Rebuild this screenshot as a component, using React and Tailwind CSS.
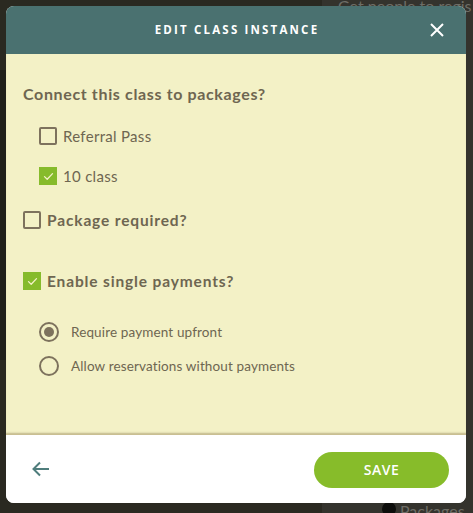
import React from "react";

function Checkbox({ checked }) {
  return checked ? (
    <span className="flex h-[18px] w-[18px] shrink-0 items-center justify-center bg-[#86bb2b]">
      <svg width="11" height="9" viewBox="0 0 11 9" fill="none">
        <path d="M1.5 4.6 L4.2 7.2 L9.5 1.6" stroke="#f4f1c6" strokeWidth="1.3" strokeLinecap="round" strokeLinejoin="round" />
      </svg>
    </span>
  ) : (
    <span className="block h-[18px] w-[18px] shrink-0 rounded-[2px] border-2 border-[#7d725d]" />
  );
}

function Radio({ checked }) {
  return (
    <span className="flex h-[20px] w-[20px] shrink-0 items-center justify-center rounded-full border-2 border-[#7d725d]">
      {checked && <span className="block h-[10px] w-[10px] rounded-full bg-[#7d725d]" />}
    </span>
  );
}

export default function App() {
  return (
    <div className="relative h-[513px] w-[473px] overflow-hidden bg-[#2a2921]" style={{ fontFamily: "Lato, 'Noto Sans', sans-serif" }}>
      {/* dimmed page underneath */}
      <div className="absolute left-[322px] top-0 h-[513px] w-[151px] bg-[#34332d]" />
      <div className="absolute left-[0px] top-[70px] h-[290px] w-[6px] bg-[#1f201a]" />
      <div className="absolute left-[338px] top-[-6px] text-[16px] text-[#6e6d66]">Get people to regis</div>
      <div className="absolute left-[382px] top-[502px] h-[14px] w-[14px] rounded-full bg-[#0d0d0b]" />
      <div className="absolute left-[400px] top-[499px] text-[16px] text-[#6e6d66]">Packages $</div>

      {/* modal */}
      <div className="relative ml-[6px] mt-[6px] flex h-[497px] w-[460px] flex-col overflow-hidden rounded-[8px] bg-white">
        <div className="relative flex h-[48px] shrink-0 items-center justify-center bg-[#4a7170]">
          <span className="pl-[2px] text-[11.5px] font-bold tracking-[0.19em] text-white" style={{ fontFamily: "'Open Sans', sans-serif" }}>
            EDIT CLASS INSTANCE
          </span>
          <svg className="absolute right-[22px] top-[17px]" width="14" height="14" viewBox="0 0 14 14">
            <path d="M1 1 L13 13 M13 1 L1 13" stroke="white" strokeWidth="2" />
          </svg>
        </div>

        <div className="flex flex-1 flex-col bg-[#f3f1c6] pl-[17px] pt-[30px] text-[#6e6651] shadow-[inset_0_-2px_2px_-1px_#bfb58a]">
          <div className="text-[16px] font-bold leading-[20px] tracking-[0.04em]">Connect this class to packages?</div>

          <div className="mt-[23px] flex items-center gap-[6px] pl-[16px]">
            <Checkbox />
            <span className="text-[15px] leading-[18px] tracking-[0.02em]">Referral Pass</span>
          </div>
          <div className="mt-[22px] flex items-center gap-[6px] pl-[16px]">
            <Checkbox checked />
            <span className="text-[15px] leading-[18px] tracking-[0.02em]">10 class</span>
          </div>

          <div className="mt-[26px] flex items-center gap-[6px]">
            <Checkbox />
            <span className="text-[15.5px] font-bold leading-[18px] tracking-[0.055em]">Package required?</span>
          </div>

          <div className="mt-[43px] flex items-center gap-[6px]">
            <Checkbox checked />
            <span className="text-[15.5px] font-bold leading-[18px] tracking-[0.055em]">Enable single payments?</span>
          </div>

          <div className="mt-[32px] flex items-center gap-[12px] pl-[16px]">
            <Radio checked />
            <span className="text-[13.5px] leading-[18px] tracking-[0.01em]">Require payment upfront</span>
          </div>
          <div className="mt-[14px] flex items-center gap-[12px] pl-[16px]">
            <Radio />
            <span className="text-[13.5px] leading-[18px] tracking-[0.01em]">Allow reservations without payments</span>
          </div>
        </div>

        <div className="flex h-[69px] shrink-0 items-center justify-between border-t border-[#c9bf92] bg-white pl-[26px] pr-[17px]">
          <svg width="18" height="16" viewBox="0 0 18 16" fill="none">
            <path d="M17 8 H2 M8 1.5 L1.5 8 L8 14.5" stroke="#4f7d7c" strokeWidth="2" />
          </svg>
          <button className="mt-[1px] flex h-[36px] w-[135px] items-center justify-center rounded-full bg-[#87bc2a] text-[14px] font-semibold tracking-[0.04em] text-white" style={{ fontFamily: "'Open Sans', sans-serif" }}>
            SAVE
          </button>
        </div>
      </div>
    </div>
  );
}
